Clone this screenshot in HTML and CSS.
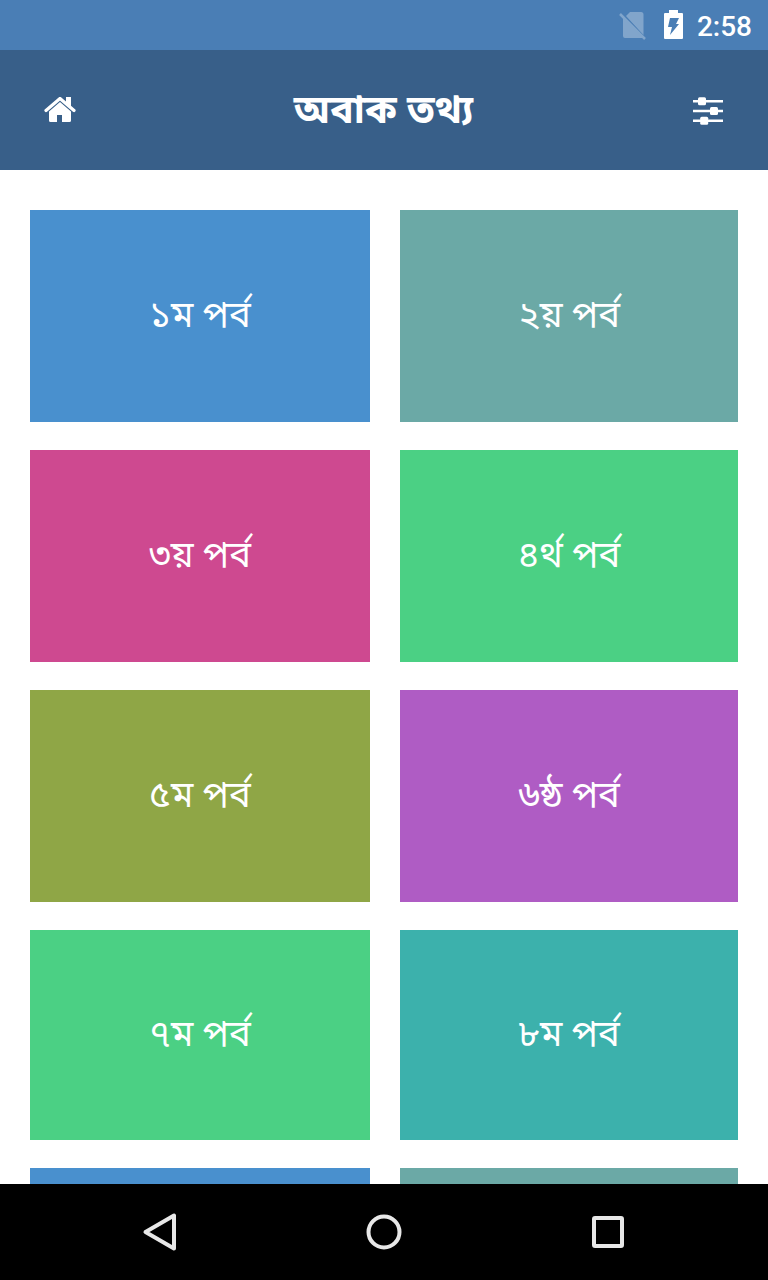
FILE: index.html
```html
<!DOCTYPE html>
<html lang="bn">
<head>
    <meta charset="UTF-8">
    <meta name="viewport" content="width=device-width, initial-scale=1.0">
    <title>অবাক তথ্য</title>
    <link rel="stylesheet" href="styles.css">
</head>
<body>
    <!-- Status bar -->
    <div class="status-bar">
        <svg class="no-sim" width="28" height="30" viewBox="0 0 28 30">
            <path d="M11 2h11a2.500 2.500 0 0 1 2.500 2.500V25L7 6zM4 8l20 20H6a2 2 0 0 1-2-2z" fill="#fff"/>
            <path d="M1 4l25 25" stroke="#fff" stroke-width="2.500"/>
        </svg>
        <svg class="battery" width="20" height="30" viewBox="0 0 20 30">
            <path d="M5 0h9v3h4a1 1 0 0 1 1 1v24a1 1 0 0 1-1 1H1a1 1 0 0 1-1-1V4a1 1 0 0 1 1-1h4z" fill="#fff"/>
            <path d="M6 8h9l-3 6h3L6 25l2-8H4z" fill="#4a7eb5"/>
        </svg>
        <span class="clock">2:58</span>
    </div>

    <!-- App header -->
    <header class="header">
        <svg width="32" height="28" viewBox="0 0 32 28" fill="#fff">
            <path d="M2 13.500L16 1.500L30 13.500" fill="none" stroke="#fff" stroke-width="3.200" stroke-linecap="round" stroke-linejoin="round"/>
            <path d="M22 0h5v11l-5-4z"/>
            <path d="M16 5L5 14.500V23.500q0 1.500 1.500 1.500H13v-7h5v7h7.500q1.500 0 1.500-1.500v-9z"/>
        </svg>
        <h1>অবাক তথ্য</h1>
        <svg width="30" height="28" viewBox="0 0 30 28" fill="#fff">
            <path d="M0 3h30v2.500H0zM0 12.800h30v2.500H0zM0 22.500h30v2.500H0z"/>
            <rect x="5" y="0.300" width="8" height="8" rx="1.500"/>
            <rect x="17" y="10" width="8" height="8" rx="1.500"/>
            <rect x="7.200" y="19.800" width="8" height="8" rx="1.500"/>
        </svg>
    </header>

    <!-- Episodes -->
    <main class="grid">
        <a class="card blue">১ম পর্ব</a>
        <a class="card sage">২য় পর্ব</a>
        <a class="card pink">৩য় পর্ব</a>
        <a class="card green">৪র্থ পর্ব</a>
        <a class="card olive">৫ম পর্ব</a>
        <a class="card purple">৬ষ্ঠ পর্ব</a>
        <a class="card green">৭ম পর্ব</a>
        <a class="card teal">৮ম পর্ব</a>
        <a class="card blue"></a>
        <a class="card sage"></a>
    </main>

    <!-- Navigation buttons -->
    <nav class="nav-bar">
        <svg width="40" height="40" viewBox="0 0 40 40"><path d="M34 3.500v33L5.500 20z"/></svg>
        <svg width="40" height="40" viewBox="0 0 40 40"><circle cx="20" cy="20" r="15.500"/></svg>
        <svg width="40" height="40" viewBox="0 0 40 40"><rect x="6" y="6" width="28" height="28" rx="1"/></svg>
    </nav>
</body>
</html>
```
FILE: styles.css
```css
body {
    margin: 0;
    height: 1280px;
    display: flex;
    flex-direction: column;
    overflow: hidden;
    background-color: #fff;
    color: #fff;
    font-family: "Noto Sans Bengali", "Noto Sans", sans-serif;
}
.status-bar {
    height: 50px;
    flex: none;
    box-sizing: border-box;
    display: flex;
    align-items: center;
    justify-content: flex-end;
    padding-right: 16px;
    background-color: #4a7eb5;
}
.no-sim {
    opacity: 0.3;
    margin-right: 17px;
}
.battery {
    margin-right: 13px;
}
.clock {
    font: 500 28px Roboto, sans-serif;
    padding-top: 3px;
}
.header {
    height: 120px;
    flex: none;
    box-sizing: border-box;
    display: flex;
    align-items: center;
    justify-content: space-between;
    padding: 0 45px 0 44px;
    background-color: #385f89;
}
.header svg {
    padding-top: 2px;
}
.header h1 {
    margin: 0;
    padding: 6px 2px 0 0;
    font-size: 39.3px;
    line-height: 50px;
}
.grid {
    flex: 1;
    min-height: 0;
    overflow: hidden;
    display: grid;
    grid-template-columns: 340px 338px;
    grid-template-rows: 212px 212px 212px 210px 210px;
    gap: 28px 30px;
    padding: 40px 30px 0;
}
.card {
    display: flex;
    align-items: center;
    justify-content: center;
    box-sizing: border-box;
    padding-top: 3px;
    font-size: 36.500px;
}
.blue { background-color: #4990ce; }
.sage { background-color: #6ba9a6; }
.pink { background-color: #ce4990; }
.green { background-color: #4bd084; }
.olive { background-color: #8fa646; }
.purple { background-color: #af5cc4; }
.teal { background-color: #3cb1ac; }
.nav-bar {
    height: 96px;
    flex: none;
    display: flex;
    align-items: center;
    justify-content: space-between;
    box-sizing: border-box;
    padding: 0 140px;
    background-color: #000;
}
.nav-bar svg {
    fill: none;
    stroke: #e8e8e8;
    stroke-width: 4;
    stroke-linejoin: round;
}
```
